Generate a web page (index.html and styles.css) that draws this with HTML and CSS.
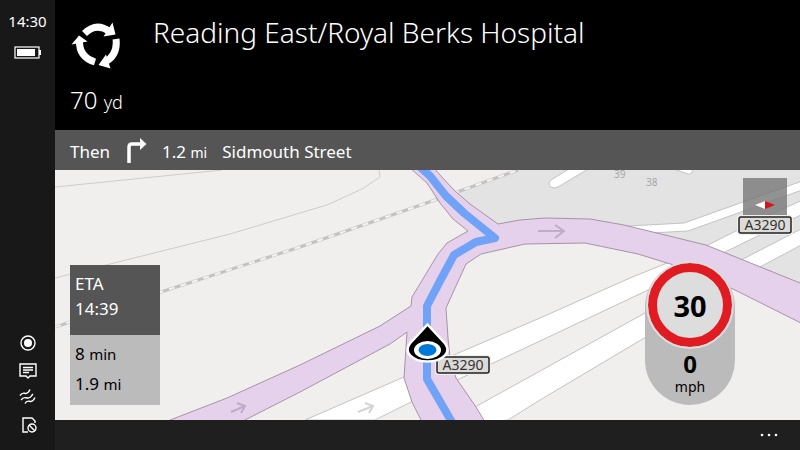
FILE: index.html
```html
<!DOCTYPE html>
<html lang="en">
<head>
    <meta charset="UTF-8">
    <meta name="viewport" content="width=device-width, initial-scale=1.0">
    <title>Maps - Navigation</title>
    <link rel="stylesheet" href="styles.css">
</head>
<body>
    <aside class="status">
        <time class="clock">14:30</time>
        <svg class="battery" width="28" height="14" viewBox="0 0 28 14">
            <rect x="1" y="1" width="24" height="11" fill="none" stroke="#fff" stroke-width="1.2"/>
            <rect x="3" y="3" width="18" height="7" fill="#fff"/>
            <rect x="25" y="4" width="2" height="5" fill="#fff"/>
        </svg>
        <div class="tray">
            <svg width="18" height="18" viewBox="0 0 18 18">
                <circle cx="9" cy="8" r="7" fill="none" stroke="#fff" stroke-width="1.4"/>
                <circle cx="9" cy="8" r="4" fill="#fff"/>
            </svg>
            <svg width="18" height="18" viewBox="0 0 18 18" fill="none" stroke="#fff" stroke-width="1.4">
                <path d="M1 2h16v12h-6l-2 2-2-2H1z"/>
                <path d="M4 5.500h10M4 8h10M4 10.500h6"/>
            </svg>
            <svg width="18" height="18" viewBox="0 0 18 18" fill="none" stroke="#fff" stroke-width="1.4">
                <path d="M1 6.500c3-4 4-2 6-2s3-2 4-4"/>
                <path d="M2 11c3-4 4-2 7-2s3-2 5-4"/>
                <path d="M6 14.500c2-4 4-2 6-2s3-2 4-4"/>
            </svg>
            <svg width="18" height="18" viewBox="0 0 18 18" fill="none" stroke="#fff" stroke-width="1.4">
                <path d="M9 16H4V2h9l3 3v2"/>
                <circle cx="13" cy="12" r="4"/>
                <path d="M10 9l6 6"/>
            </svg>
        </div>
    </aside>

    <main class="screen">
        <header class="direction">
            <div class="turn">
                <svg width="50" height="48" viewBox="70 22 50 48">
                    <g fill="none" stroke="#fff" stroke-width="7">
                        <path d="M84.500 33.500Q96 22 109 31"/>
                        <path d="M116 39Q118 55 105 62"/>
                        <path d="M95 62Q79 57 79.500 41"/>
                    </g>
                    <path fill="#fff" d="M112.500 22.500L115.500 34.500L103.500 36.500ZM98.500 65L106 54.500L110.500 68.500ZM71.500 44.500L79 35.500L87.500 41.500Z"/>
                </svg>
                <p class="distance">70 <small>yd</small></p>
            </div>
            <h1>Reading East/Royal Berks Hospital</h1>
        </header>

        <div class="next">
            <span>Then</span>
            <svg width="22" height="26" viewBox="0 0 22 26">
                <path d="M4 25V9q0-3 3-3h10" fill="none" stroke="#fff" stroke-width="3.500"/>
                <path d="M15 0l6.500 6L15 12z" fill="#fff"/>
            </svg>
            <span>1.2 <small>mi</small></span>
            <span>Sidmouth Street</span>
        </div>

        <section class="map">
            <svg class="roads" viewBox="55 170 745 250" preserveAspectRatio="xMidYMid slice">
                <rect x="55" y="170" width="745" height="250" fill="#f0efed"/>
                <path fill="#e3e3e3" d="M455 193L518 170H800V300L700 250L590 225H498Z"/>

                <!-- boundaries -->
                <g fill="none" stroke="#cdcccb">
                    <path d="M55 187L222 170"/>
                    <path d="M55 278L110 264L230 234L310 210L327 205L362 189L380 177L379 170"/>
                </g>

                <!-- railway -->
                <path d="M55 327L161 292L300 247L438 199L518 170" fill="none" stroke="#c3c2c2" stroke-width="3"/>
                <path d="M55 327L161 292L300 247L438 199L518 170" fill="none" stroke="#f4f4f4" stroke-width="2" stroke-dasharray="6 6"/>

                <!-- minor roads -->
                <g fill="#fff" stroke="#c3c2c2">
                    <path d="M305 420L404 377L456 354L540 318L630 278L667 263L706 246L760 219L805 199V213L725 252L646 291L540 341L457 380L411 402L375 420Z"/>
                    <path d="M440 427L475 407L560 360L645 313L743 259L805 227V243L760 267L646 337L540 400L508 420Z"/>
                    <path d="M610 227L684 223L805 180V189L688 231L650 233Z"/>
                    <path d="M582 161L551 180Q547 184 551 187Q554 189 558 187L590 168ZM665 166L688 174Q692 175 693 169Z"/>
                </g>

                <!-- main roads -->
                <path fill="#e5d1eb" stroke="#a892a6" d="M410 168L427 183L440 203L453 219L468 231L447 243L438 254L412 297L411 306L397 315L380 326L300 365L227 398L165 422H241L300 392L390 344L407 332L404 378L412 402L422 422H485L476 407L456 378L450 358L448 338L446 308L466 264L481 254L525 244L585 243L638 254L680 267L733 289L805 325V285L706 245L624 225L590 219L545 218L520 220L498 224L470 204L455 191L440 175L434 168Z"/>

                <g fill="none" stroke="#c2aac9" stroke-width="2">
                    <path d="M538 231H564M555 225L564 231L555 238"/>
                    <path d="M231 412L245 406M237 403L245 406L241 413"/>
                    <path stroke="#d4d4d4" d="M358 412L373 406M365 403L373 406L369 413"/>
                </g>

                <!-- route -->
                <path fill="none" stroke="#70a2f8" stroke-width="8" stroke-linejoin="round" d="M417 164L430 176L446 196L464 213L480 226L495 238L476 242L454 255L440 281L427 306V379L453 424"/>

                <g class="house">
                    <text x="614" y="178">39</text>
                    <text x="646" y="186">38</text>
                </g>

                <!-- compass -->
                <rect x="743" y="178" width="44" height="44" fill="#777" fill-opacity=".8"/>
                <path d="M765 201v8l-10-4z" fill="#fff"/>
                <path d="M765 201v8l10-4z" fill="#d7141a"/>

                <g class="shield">
                    <rect class="halo" x="737" y="215" width="56" height="20" rx="3"/>
                    <rect x="739" y="217" width="52" height="16" rx="2"/>
                    <text x="765" y="230">A3290</text>
                    <rect class="halo" x="435" y="355" width="56" height="20" rx="3"/>
                    <rect x="437" y="357" width="52" height="16" rx="2"/>
                    <text x="463" y="370">A3290</text>
                </g>

                <!-- current position -->
                <path d="M427.500 324.500L442 340C456 353 440 361.500 427.500 361.500C415 361.500 399 353 413 340Z" fill="#000" stroke="#fff" stroke-width="2.500"/>
                <ellipse cx="427.500" cy="350" rx="13.500" ry="9" fill="#fff"/>
                <ellipse cx="427.500" cy="350" rx="9" ry="6" fill="#0078d7"/>
            </svg>

            <div class="eta">
                <div class="arrival">
                    <p>ETA</p>
                    <p>14:39</p>
                </div>
                <div class="remaining">
                    <p>8 <small>min</small></p>
                    <p>1.9 <small>mi</small></p>
                </div>
            </div>

            <div class="speed">
                <div class="limit">30</div>
                <strong>0</strong>
                <span>mph</span>
            </div>
        </section>

        <footer class="bar">
            <button class="more" aria-label="More">
                <svg width="18" height="4" viewBox="0 0 18 4" fill="#fff">
                    <circle cx="2" cy="2" r="1.300"/>
                    <circle cx="9" cy="2" r="1.300"/>
                    <circle cx="16" cy="2" r="1.300"/>
                </svg>
            </button>
        </footer>
    </main>
</body>
</html>
```
FILE: styles.css
```css
* {
    box-sizing: border-box;
}
body {
    display: flex;
    height: 100vh;
    margin: 0;
    font-family: "Noto Sans", "Open Sans", sans-serif;
    font-size: 17px;
    color: #fff;
    background-color: #000;
    overflow: hidden;
}
p, h1 {
    margin: 0;
}
svg {
    display: block;
}
.status {
    display: flex;
    flex-direction: column;
    align-items: center;
    width: 55px;
    padding: 10px 0 16px;
    background-color: #181818;
}
.clock {
    font-size: 15px;
    line-height: 22px;
}
.battery {
    margin-top: 14px;
}
.tray {
    display: flex;
    flex-direction: column;
    gap: 9px;
    margin-top: auto;
}
.screen {
    display: flex;
    flex-direction: column;
    flex: 1;
    min-width: 0;
}
.direction {
    display: flex;
    height: 130px;
    padding: 13px 15px;
}
.turn {
    width: 83px;
    padding-top: 9px;
}
.distance {
    margin-top: 14px;
    font-size: 24px;
    font-weight: 300;
    line-height: 32px;
}
.distance small {
    font-size: 18px;
}
h1 {
    font-size: 28px;
    font-weight: 300;
    line-height: 38px;
}
.next {
    display: flex;
    align-items: center;
    gap: 15px;
    height: 40px;
    padding: 2px 15px 0;
    background-color: #555;
}
.next small {
    font-size: 14px;
}
.map {
    position: relative;
    flex: 1;
    min-height: 0;
    color: #000;
}
.roads {
    position: absolute;
    width: 100%;
    height: 100%;
}
.house {
    font-size: 10px;
    fill: #a5a5a5;
}
.shield rect {
    stroke: #222;
    stroke-width: 1.5;
    fill: #dcdbd8;
}
.shield .halo {
    stroke: none;
    fill: #f0efe9;
}
.shield text {
    font-size: 14px;
    text-anchor: middle;
    fill: #333;
}
.eta {
    position: absolute;
    left: 15px;
    bottom: 15px;
    width: 90px;
    line-height: 25px;
}
.arrival {
    height: 70px;
    padding: 6px 5px;
    color: #fff;
    background-color: #555;
}
.remaining {
    height: 70px;
    padding: 4px 5px;
    line-height: 30px;
    background-color: #bbb;
}
.remaining small {
    font-size: 15px;
}
.speed {
    position: absolute;
    right: 65px;
    bottom: 15px;
    display: flex;
    flex-direction: column;
    align-items: center;
    width: 90px;
    height: 143px;
    border-radius: 45px;
    background-color: #bbb;
}
.speed strong {
    font-size: 24px;
    line-height: 28px;
}
.speed span {
    font-size: 14px;
    line-height: 18px;
}
.limit {
    display: flex;
    align-items: center;
    justify-content: center;
    width: 84px;
    height: 84px;
    margin: 1px 0 3px;
    border: 9px solid #e11b22;
    border-radius: 50%;
    outline: 2px solid #ddd;
    font-size: 29px;
    font-weight: bold;
    background-color: #ddd;
}
.bar {
    display: flex;
    align-items: center;
    justify-content: flex-end;
    height: 30px;
    padding: 0 16px;
    background-color: #1f1f1f;
}
.more {
    padding: 6px;
    border: none;
    background: none;
    cursor: pointer;
}
```
